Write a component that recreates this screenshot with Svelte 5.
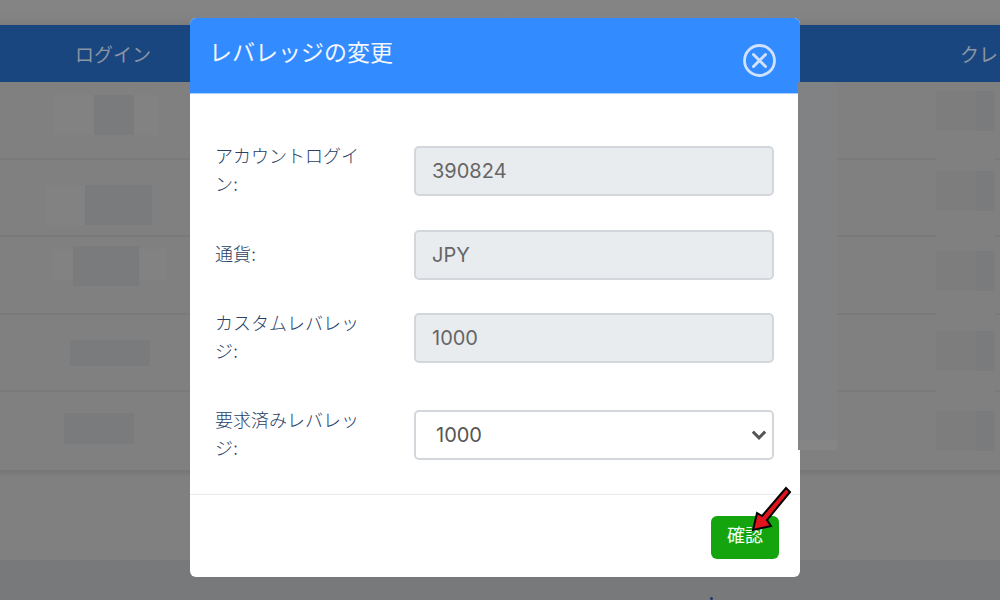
<script lang="ts">
  const rows = [
    [{ w: 104, h: 40, x: 54, y: 13, tone: 'lt' }, { w: 40, h: 40, x: 94, y: 13, tone: 'dk' }],
    [{ w: 107, h: 40, x: 45, y: 25, tone: 'lt' }, { w: 67, h: 40, x: 85, y: 25, tone: 'dk' }],
    [{ w: 114, h: 31, x: 52, y: 12, tone: 'lt' }, { w: 66, h: 40, x: 73, y: 9, tone: 'dk' }],
    [{ w: 80, h: 26, x: 70, y: 25, tone: 'dk' }],
    [{ w: 70, h: 31, x: 64, y: 21, tone: 'dk' }],
  ];
  const fields = [
    { label: 'アカウントログイン:', value: '390824' },
    { label: '通貨:', value: 'JPY' },
    { label: 'カスタムレバレッジ:', value: '1000' },
  ];
  const sideBlocks = [9, 89, 169, 249, 329];
</script>

<div class="page">
  <div class="topband"></div>
  <div class="tablehead">
    <span class="th-login">ログイン</span>
    <span class="th-credit">クレ</span>
  </div>
  <div class="tablebody">
    {#each rows as row}
      <div class="row">
        {#each row as b}
          <i class={b.tone} style="left:{b.x}px;top:{b.y}px;width:{b.w}px;height:{b.h}px"></i>
        {/each}
      </div>
    {/each}
    <div class="sidecol">
      {#each sideBlocks as y}
        <i class="side" style="top:{y}px"></i>
      {/each}
    </div>
  </div>
  <div class="midband"></div>
  <div class="footband"><span class="speck"></span></div>

  <div class="modal">
    <header class="modal-head">
      <h2>レバレッジの変更</h2>
      <svg class="close" viewBox="0 0 33 33" width="33" height="33" fill="none" stroke="#cfe2ff" aria-hidden="true">
        <circle cx="16.5" cy="16.5" r="15" stroke-width="2.8" />
        <path d="M10.500 10.500 22.500 22.500M22.500 10.500 10.500 22.500" stroke-width="3" stroke-linecap="round" />
      </svg>
    </header>
    <div class="modal-body">
      {#each fields as f}
        <div class="field">
          <label for={f.label}>{f.label}</label>
          <input id={f.label} value={f.value} disabled />
        </div>
      {/each}
      <div class="field">
        <label for="lev">要求済みレバレッジ:</label>
        <div class="select" id="lev">
          <span>1000</span>
          <svg viewBox="0 0 16 16" width="18" height="18" fill="none" stroke="#555" stroke-width="2.6" aria-hidden="true">
            <path d="M2.500 5 8 10.500 13.500 5" />
          </svg>
        </div>
      </div>
    </div>
    <footer class="modal-foot">
      <button type="button">確認</button>
    </footer>
  </div>

  <div class="patch"></div>

  <svg class="arrow" viewBox="0 0 50 60" width="50" height="60" aria-hidden="true">
    <path d="M36 3 40 7 17 35 21 41 3 45 7 28 12 31Z" fill="#e0141c" stroke="#000" stroke-width="2" />
  </svg>
</div>

<style>
  :global(body) {
    margin: 0;
  }

  .page {
    position: relative;
    width: 1000px;
    height: 600px;
    overflow: hidden;
    display: flex;
    flex-direction: column;
    background: #808080;
    font-family: Inter, 'Noto Sans CJK JP', sans-serif;
  }

  .topband {
    height: 25px;
    flex: none;
    background: linear-gradient(#858585, #838383 70%, #7c7c7c);
  }

  .tablehead {
    height: 57px;
    flex: none;
    display: flex;
    align-items: center;
    background: #1a4680;
    color: #8b95a3;
    font-size: 19px;
  }

  .th-login {
    margin-left: 75px;
  }

  .th-credit {
    margin-left: auto;
    width: 40px;
    white-space: nowrap;
    overflow: hidden;
  }

  .tablebody {
    position: relative;
    height: 388px;
    flex: none;
    display: flex;
    flex-direction: column;
  }

  .row {
    position: relative;
    flex: 1;
    border-bottom: 2px solid #7a7a7a;
  }

  .row:nth-child(5) {
    border-bottom-color: transparent;
  }

  .tablebody i {
    position: absolute;
    display: block;
  }

  .lt {
    background: #828283;
  }

  .dk {
    background: #7a7b7c;
  }

  .sidecol {
    position: absolute;
    left: 936px;
    top: 0;
    bottom: 0;
    width: 59px;
    background: #808080;
  }

  .tablebody .side {
    left: 0;
    width: 59px;
    height: 40px;
    background: linear-gradient(90deg, #7d7d7e 40px, #7a7b7c 40px);
  }

  .midband {
    height: 90px;
    flex: none;
    background: linear-gradient(#767676, #808080 7px);
  }

  .footband {
    flex: 1;
    position: relative;
    background: #78797b;
  }

  .speck {
    position: absolute;
    left: 710px;
    top: 37px;
    width: 3px;
    height: 3px;
    border-radius: 50%;
    background: #1a3a6a;
  }

  .modal {
    position: absolute;
    left: 190px;
    top: 18px;
    width: 610px;
    height: 559px;
    display: flex;
    flex-direction: column;
    background: #fff;
    border-radius: 6px;
    overflow: hidden;
  }

  .modal-head {
    height: 76px;
    flex: none;
    box-sizing: border-box;
    display: flex;
    justify-content: space-between;
    padding: 20px 24px 0 19px;
    background: #328bff;
    border-bottom: 1px solid #a9cfff;
  }

  h2 {
    margin: 0;
    color: #f2f7ff;
    font-size: 23px;
    font-weight: 400;
    line-height: 30px;
  }

  .close {
    margin-top: 6px;
  }

  .modal-body {
    height: 401px;
    flex: none;
    box-sizing: border-box;
    padding: 52px 25px 0;
    display: flex;
    flex-direction: column;
    border-bottom: 1px solid #e9ecef;
  }

  .field {
    height: 50px;
    margin-bottom: 34px;
    display: flex;
    align-items: center;
    gap: 50px;
    flex: none;
  }

  .field:nth-child(2) {
    margin-bottom: 33px;
  }

  .field:nth-child(3) {
    margin-bottom: 47px;
  }

  label {
    width: 149px;
    flex: none;
    color: #2a4066;
    font-size: 18px;
    font-weight: 300;
    line-height: 28px;
  }

  input,
  .select {
    width: 360px;
    height: 50px;
    box-sizing: border-box;
    border: 2px solid #d3d7dc;
    border-radius: 5px;
    font: inherit;
    font-size: 20px;
    color: #666;
    padding: 0 16px;
  }

  input {
    background: #e9ecef;
    opacity: 1;
  }

  .select {
    display: flex;
    align-items: center;
    justify-content: space-between;
    background: #fff;
    color: #555;
    padding: 0 4px 0 20px;
  }

  .modal-foot {
    flex: 1;
    display: flex;
    justify-content: flex-end;
    align-items: flex-start;
    padding: 21px 21px 0 0;
  }

  button {
    width: 68px;
    height: 43px;
    border: 0;
    border-radius: 6px;
    background: #14a50e;
    color: #f4fff2;
    font: inherit;
    font-size: 18px;
    font-weight: 400;
    padding: 0 0 8px;
  }

  .patch {
    position: absolute;
    left: 798px;
    top: 82px;
    width: 39px;
    height: 368px;
    background: linear-gradient(#818283 358px, #858585 358px);
  }

  .arrow {
    position: absolute;
    left: 750px;
    top: 485px;
  }
</style>
